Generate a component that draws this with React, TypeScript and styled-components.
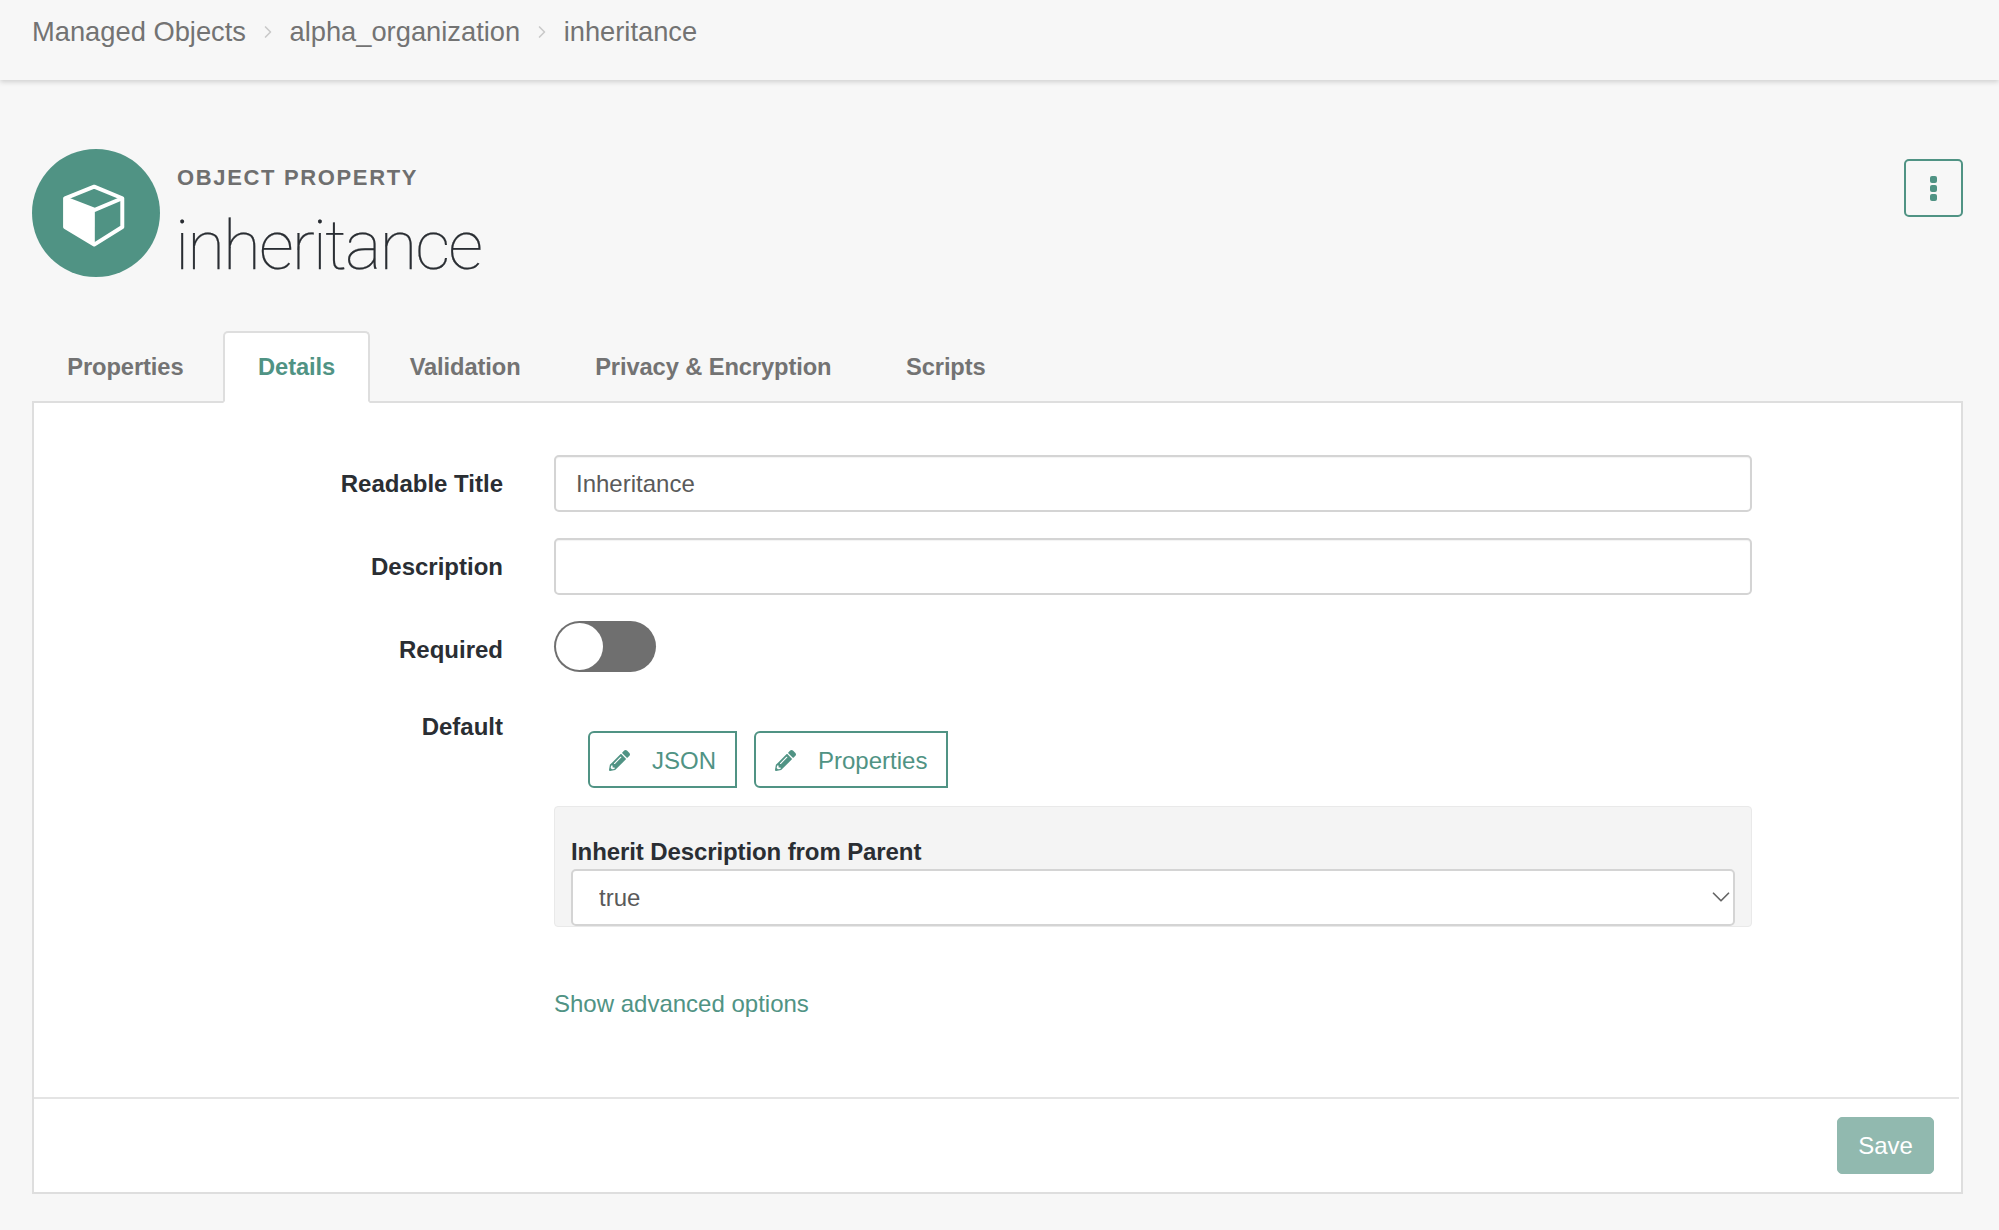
import styled, { createGlobalStyle } from "styled-components";
import { FaPencilAlt } from "react-icons/fa";
import { ChevronRight, ChevronDown } from "lucide-react";

const GlobalStyle = createGlobalStyle`
  html, body {
    margin: 0;
    padding: 0;
    background: #f7f7f7;
  }
  * {
    box-sizing: border-box;
  }
  body {
    font-family: "Liberation Sans", Arial, sans-serif;
    font-size: 24px;
    color: #2a2e33;
  }
`;

const Page = styled.div`
  width: 1999px;
  height: 1230px;
  overflow: hidden;
`;

const TopBar = styled.header`
  height: 80px;
  padding: 0 32px 16px;
  display: flex;
  align-items: center;
  background: #f7f7f7;
  box-shadow: 0 2px 5px rgba(0, 0, 0, 0.16);
`;

const Crumb = styled.span`
  font-size: 27.3px;
  color: #737373;
`;

const CrumbSep = styled.span`
  display: flex;
  width: 43.5px;
  justify-content: center;
  color: #c9c9c9;
`;

const Main = styled.main`
  padding: 69px 36px 0 32px;
`;

const Hero = styled.div`
  display: flex;
  align-items: flex-start;
  gap: 17px;
  height: 182px;
`;

const Avatar = styled.div`
  width: 128px;
  height: 128px;
  border-radius: 50%;
  background: #509384;
  flex-shrink: 0;
  svg {
    display: block;
    width: 100%;
    height: 100%;
  }
`;

const HeroText = styled.div`
  flex: 1;
  padding-top: 16px;
`;

const Kicker = styled.div`
  font-size: 22px;
  line-height: 26px;
  font-weight: 700;
  letter-spacing: 1.65px;
  color: #6f6f6f;
`;

const Title = styled.h1`
  margin: 14px 0 0 -2px;
  font-family: "Roboto", "Liberation Sans", sans-serif;
  font-size: 69px;
  line-height: 82px;
  font-weight: 100;
  letter-spacing: -1.95px;
  color: #2a2e33;
  -webkit-text-stroke: 0.25px #2a2e33;
`;

const KebabButton = styled.button`
  width: 59px;
  height: 58px;
  margin-top: 10px;
  padding: 0;
  display: flex;
  flex-direction: column;
  align-items: center;
  justify-content: center;
  gap: 2px;
  background: transparent;
  border: 2px solid #509384;
  border-radius: 5px;
`;

const KebabDot = styled.span`
  width: 7px;
  height: 7px;
  border-radius: 2px;
  background: #509384;
`;

const Tabs = styled.nav`
  display: flex;
  gap: 4px;
  position: relative;
  z-index: 1;
  margin-bottom: -2px;
`;

const Tab = styled.a<{ $active?: boolean }>`
  height: 72px;
  padding: 0 33.3px;
  display: flex;
  align-items: center;
  font-weight: 700;
  font-size: 23.7px;
  letter-spacing: -0.1px;
  color: ${(props) => (props.$active ? "#509384" : "#737373")};
  background: ${(props) => (props.$active ? "#fff" : "transparent")};
  border: 2px solid ${(props) => (props.$active ? "#dedede" : "transparent")};
  border-bottom: 2px solid ${(props) => (props.$active ? "#fff" : "transparent")};
  border-radius: 5px 5px 0 0;
`;

const Panel = styled.section`
  height: 793px;
  background: #fff;
  border: 2px solid #dedede;
  display: flex;
  flex-direction: column;
`;

const Form = styled.div`
  flex: 1;
  padding-top: 52px;
  display: flex;
  flex-direction: column;
  gap: 26px;
`;

const Row = styled.div`
  display: grid;
  grid-template-columns: 469px 1198px;
  column-gap: 51px;
`;

const DefaultRow = styled(Row)`
  margin-top: -6px;
`;

const Label = styled.label`
  text-align: right;
  font-weight: 700;
  line-height: 57px;
`;

const TextField = styled.input`
  width: 100%;
  height: 57px;
  padding: 0 20px;
  font: inherit;
  color: #5a5a5a;
  background: #fff;
  border: 2px solid #d4d4d4;
  border-radius: 5px;
  box-shadow: inset 0 1px 1px rgba(0, 0, 0, 0.05);
  outline: none;
`;

const Toggle = styled.div`
  width: 102px;
  height: 51px;
  border-radius: 26px;
  background: #6f6f6f;
  padding: 2px;
`;

const ToggleKnob = styled.div`
  width: 47px;
  height: 47px;
  border-radius: 50%;
  background: #fff;
`;

const DefaultBlock = styled.div`
  padding-top: 33px;
`;

const ButtonRow = styled.div`
  display: flex;
  gap: 17px;
  padding-left: 34px;
  margin-bottom: 18px;
`;

const OutlineButton = styled.button`
  height: 57px;
  padding: 2px 19px 0;
  display: flex;
  align-items: center;
  gap: 22px;
  font: inherit;
  line-height: 51px;
  color: #509384;
  background: transparent;
  border: 2px solid #509384;
  border-radius: 6px 0 0 6px;
  svg {
    width: 21px;
    height: 21px;
  }
`;

const GreyBox = styled.div`
  height: 121px;
  padding: 28px 16px 0 16px;
  background: #f4f4f4;
  border: 1px solid #e9e9e9;
  border-radius: 4px;
`;

const BoxLabel = styled.div`
  font-weight: 700;
  line-height: 34px;
  letter-spacing: -0.1px;
`;

const SelectWrap = styled.div`
  position: relative;
  svg {
    position: absolute;
    right: -1px;
    top: 13px;
    color: #666;
    pointer-events: none;
  }
`;

const SelectField = styled.select`
  display: block;
  width: 100%;
  height: 57px;
  padding: 0 26px;
  font: inherit;
  color: #5a5a5a;
  background: #fff;
  border: 2px solid #d4d4d4;
  border-radius: 5px;
  appearance: none;
  outline: none;
`;

const AdvancedLink = styled.a`
  display: block;
  margin-top: 63px;
  line-height: 28px;
  color: #509384;
`;

const Footer = styled.footer`
  height: 95px;
  margin-right: 2px;
  padding: 18px 25px 0 0;
  display: flex;
  justify-content: flex-end;
  align-items: flex-start;
  border-top: 2px solid #e4e4e4;
`;

const SaveButton = styled.button`
  width: 97px;
  height: 57px;
  font: inherit;
  color: #fff;
  background: #91b9af;
  border: 1px solid #91b9af;
  border-radius: 5px;
`;

const tabs = ["Properties", "Details", "Validation", "Privacy & Encryption", "Scripts"];

const CubeBadge = () => (
  <svg viewBox="32 26 387 387">
    <path
      d="M132 175 220 140 305 175 305 262 220 315 132 262Z"
      fill="none"
      stroke="#fff"
      strokeWidth="12"
      strokeLinejoin="round"
    />
    <path d="M132 175 222 210 222 315 132 262Z" fill="#fff" />
    <path d="M132 175 222 210 305 175" fill="none" stroke="#fff" strokeWidth="12" />
  </svg>
);

const App = () => {
  return (
    <Page>
      <GlobalStyle />
      <TopBar>
        <Crumb>Managed Objects</Crumb>
        <CrumbSep>
          <ChevronRight size={20} />
        </CrumbSep>
        <Crumb>alpha_organization</Crumb>
        <CrumbSep>
          <ChevronRight size={20} />
        </CrumbSep>
        <Crumb>inheritance</Crumb>
      </TopBar>
      <Main>
        <Hero>
          <Avatar>
            <CubeBadge />
          </Avatar>
          <HeroText>
            <Kicker>OBJECT PROPERTY</Kicker>
            <Title>inheritance</Title>
          </HeroText>
          <KebabButton>
            <KebabDot />
            <KebabDot />
            <KebabDot />
          </KebabButton>
        </Hero>
        <Tabs>
          {tabs.map((tab) => (
            <Tab key={tab} $active={tab === "Details"}>
              {tab}
            </Tab>
          ))}
        </Tabs>
        <Panel>
          <Form>
            <Row>
              <Label>Readable Title</Label>
              <TextField value="Inheritance" readOnly />
            </Row>
            <Row>
              <Label>Description</Label>
              <TextField value="" readOnly />
            </Row>
            <Row>
              <Label>Required</Label>
              <Toggle>
                <ToggleKnob />
              </Toggle>
            </Row>
            <DefaultRow>
              <Label>Default</Label>
              <DefaultBlock>
                <ButtonRow>
                  <OutlineButton>
                    <FaPencilAlt />
                    JSON
                  </OutlineButton>
                  <OutlineButton>
                    <FaPencilAlt />
                    Properties
                  </OutlineButton>
                </ButtonRow>
                <GreyBox>
                  <BoxLabel>Inherit Description from Parent</BoxLabel>
                  <SelectWrap>
                    <SelectField defaultValue="true">
                      <option value="true">true</option>
                      <option value="false">false</option>
                    </SelectField>
                    <ChevronDown size={30} strokeWidth={1.4} />
                  </SelectWrap>
                </GreyBox>
                <AdvancedLink>Show advanced options</AdvancedLink>
              </DefaultBlock>
            </DefaultRow>
          </Form>
          <Footer>
            <SaveButton>Save</SaveButton>
          </Footer>
        </Panel>
      </Main>
    </Page>
  );
};

export default App;
